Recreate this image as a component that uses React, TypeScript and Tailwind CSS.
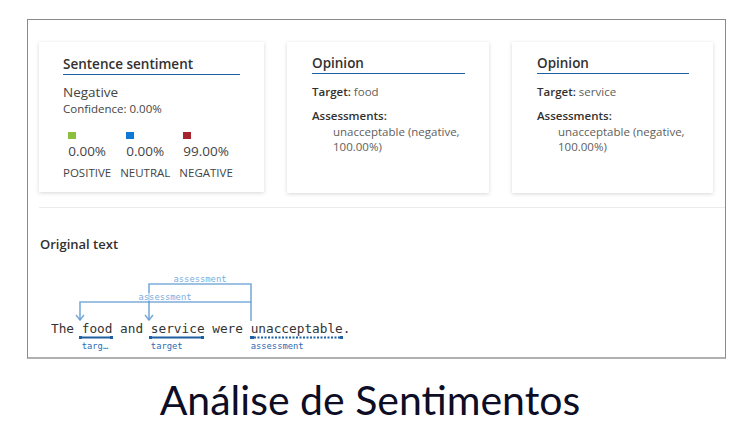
import React from "react";

const ui = { fontFamily: '"Open Sans", "Noto Sans", sans-serif' };
const mono = { fontFamily: '"DejaVu Sans Mono", "Liberation Mono", monospace' };

const scores = [
  { color: "bg-[#8cbf3f]", value: "0.00%", label: "POSITIVE" },
  { color: "bg-[#0f78d4]", value: "0.00%", label: "NEUTRAL" },
  { color: "bg-[#a4262c]", value: "99.00%", label: "NEGATIVE" },
];

function CardTitle({ children }: { children: React.ReactNode }) {
  return (
    <div className="border-b-[1.5px] border-[#1f5fa3] pb-[1px] text-[13.5px] leading-[18px] font-semibold text-[#323130]">
      {children}
    </div>
  );
}

function SentimentCard() {
  return (
    <div className="w-[225px] h-[150px] bg-white shadow-[0_1px_4px_rgba(0,0,0,0.16)] px-[24px] pt-[13px]">
      <CardTitle>Sentence sentiment</CardTitle>
      <div className="mt-[8px] text-[13.5px] leading-[18px] text-[#444]">Negative</div>
      <div className="text-[11.5px] leading-[16px] text-[#444]">Confidence: 0.00%</div>
      <div className="mt-[15px] flex text-[#444]">
        {scores.map((s) => (
          <div key={s.label} className="flex flex-col items-center mr-[9px]">
            <div className="flex flex-col items-start">
              <div className={`w-[8px] h-[7px] ${s.color}`} />
              <div className="mt-[3px] text-[13.5px] leading-[18px]">{s.value}</div>
            </div>
            <div className="mt-[5px] text-[11.5px] leading-[16px]">{s.label}</div>
          </div>
        ))}
      </div>
    </div>
  );
}

function OpinionCard({ target, width }: { target: string; width: string }) {
  return (
    <div className={`${width} h-[151px] bg-white shadow-[0_1px_4px_rgba(0,0,0,0.16)] pl-[25px] pr-[24px] pt-[12px]`}>
      <CardTitle>Opinion</CardTitle>
      <div className="mt-[10px] text-[11.5px] leading-[16px] text-[#605e5c]">
        <span className="font-semibold text-[#323130]">Target:</span> {target}
      </div>
      <div className="mt-[8px] text-[11.5px] leading-[16px] font-semibold text-[#323130]">Assessments:</div>
      <div className="pl-[21px] text-[11.5px] leading-[15px] text-[#605e5c]">
        unacceptable (negative, 100.00%)
      </div>
    </div>
  );
}

function Diagram() {
  const word = "relative inline-block";
  const tag = "absolute left-0 top-[20px] text-[8.8px] leading-[10px] text-[#2a6db5] whitespace-nowrap";
  return (
    <div className="relative ml-[23px] mt-[20px] h-[80px] w-[320px]" style={mono}>
      <svg className="absolute inset-0" width="320" height="80" fill="none">
        <g stroke="#5b97cf" strokeOpacity="0.8" strokeWidth="1.6">
          <path d="M200 47 V10 H98 V46" />
          <path d="M200 28 H29 V46" />
          <path d="M94 41 L98 46 L102 41" />
          <path d="M25 41 L29 46 L33 41" />
        </g>
        <g fill="#ffffff" fillOpacity="0.5">
          <rect x="121" y="1" width="55" height="8" />
          <rect x="86" y="19" width="55" height="8" />
        </g>
        <g stroke="#1f5fa3" strokeWidth="2">
          <path d="M30 63.5 H60" />
          <path d="M100 63.5 H151" />
          <path d="M203 63.5 H289" strokeDasharray="2 1.5" />
        </g>
        <g fill="#1f5fa3">
          <rect x="28" y="62" width="3" height="3" />
          <rect x="59" y="62" width="3" height="3" />
          <rect x="98" y="62" width="3" height="3" />
          <rect x="150" y="62" width="3" height="3" />
          <rect x="199" y="62" width="4" height="3" />
          <rect x="289" y="62" width="3" height="3" />
        </g>
        <g fill="#7aaedf" fontSize="8.8" fontFamily="DejaVu Sans Mono, monospace" textAnchor="middle">
          <text x="149" y="8">assessment</text>
          <text x="114" y="26">assessment</text>
        </g>
      </svg>
      <div className="absolute left-0 top-[47px] text-[12.75px] leading-[16px] text-[#333] whitespace-pre">
        The <span className={word}>food<span className={tag}>targ…</span></span> and{" "}
        <span className={word}>service<span className={tag}>target</span></span> were{" "}
        <span className={word}>unacceptable<span className={tag}>assessment</span></span>.
      </div>
    </div>
  );
}

export default function App() {
  return (
    <div className="w-[748px] h-[428px] bg-white flex flex-col" style={ui}>
      <div className="ml-[27px] mt-[19px] w-[699px] h-[340px] border border-[#8a8a8a] border-b-2 border-b-[#b0b0b0] flex flex-col">
        <div className="flex gap-[23px] pl-[11px] pt-[22px]">
          <SentimentCard />
          <OpinionCard target="food" width="w-[202px]" />
          <OpinionCard target="service" width="w-[201px]" />
        </div>
        <div className="ml-[11px] mt-[14px] h-px bg-[#ececec]" />
        <div className="ml-[12px] mt-[26px] text-[13px] leading-[20px] font-semibold text-[#323130]">Original text</div>
        <Diagram />
      </div>
      <div
        className="mt-[17px] pr-[8px] text-center text-[41px] leading-[48px] text-[#0d0d26]"
        style={{ fontFamily: 'Lato, "Open Sans", sans-serif' }}
      >
        Análise de Sentimentos
      </div>
    </div>
  );
}
